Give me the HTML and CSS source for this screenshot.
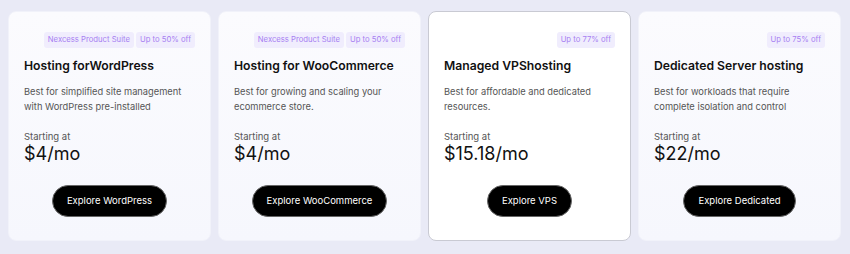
FILE: index.html
```html
<!DOCTYPE html>
<html lang="en">
<head>
  <meta charset="UTF-8" />
  <meta name="viewport" content="width=device-width, initial-scale=1" />
  <title>Hosting plans</title>
  <link rel="stylesheet" href="styles.css">
</head>
<body>
  <div class="plans">
    <div class="plan">
      <div class="tags"><span class="tag">Nexcess Product Suite</span><span class="tag">Up to 50% off</span></div>
      <h3>Hosting forWordPress</h3>
      <p class="desc">Best for simplified site management with WordPress pre-installed</p>
      <p class="from">Starting at</p>
      <p class="price">$4/mo</p>
      <div class="cta"><a class="btn" href="#">Explore WordPress</a></div>
    </div>
    <div class="plan">
      <div class="tags"><span class="tag">Nexcess Product Suite</span><span class="tag">Up to 50% off</span></div>
      <h3>Hosting for WooCommerce</h3>
      <p class="desc">Best for growing and scaling your ecommerce store.</p>
      <p class="from">Starting at</p>
      <p class="price">$4/mo</p>
      <div class="cta"><a class="btn" href="#">Explore WooCommerce</a></div>
    </div>
    <div class="plan active">
      <div class="tags"><span class="tag">Up to 77% off</span></div>
      <h3>Managed VPShosting</h3>
      <p class="desc">Best for affordable and dedicated resources.</p>
      <p class="from">Starting at</p>
      <p class="price">$15.18/mo</p>
      <div class="cta"><a class="btn" href="#">Explore VPS</a></div>
    </div>
    <div class="plan">
      <div class="tags"><span class="tag">Up to 75% off</span></div>
      <h3>Dedicated Server hosting</h3>
      <p class="desc">Best for workloads that require complete isolation and control</p>
      <p class="from">Starting at</p>
      <p class="price">$22/mo</p>
      <div class="cta"><a class="btn" href="#">Explore Dedicated</a></div>
    </div>
  </div>
</body>
</html>
```

FILE: styles.css
```css
body {
  margin: 0;
  background: #e9eaf6;
  font-family: Inter, "Liberation Sans", sans-serif;
  color: #111;
}
.plans {
  display: flex;
  gap: 7px;
  padding: 11px 9px 13px 8px;
}
.plan {
  flex: 1;
  height: 230px;
  box-sizing: border-box;
  padding: 20px 15px 0 15px;
  background: linear-gradient(#fbfbfe, #f6f7fd);
  border: 1px solid #f1f2fa;
  border-radius: 8px;
}
.plan.active {
  border-color: #c9cad3;
  background: #fff;
}
.tags {
  display: flex;
  justify-content: flex-end;
  gap: 2px;
  height: 16px;
}
.tag {
  background: #f0edfd;
  color: #a77ff2;
  font-size: 7.7px;
  line-height: 16px;
  padding: 0 4px;
  border-radius: 3px;
}
h3 {
  margin: 10px 0 0;
  font-size: 12.2px;
  font-weight: 600;
  line-height: 16px;
}
.desc {
  margin: 10px 0 0;
  font-size: 9.3px;
  line-height: 15px;
  color: #555;
  height: 30px;
}
.from {
  margin: 17px 0 0;
  font-size: 9.5px;
  line-height: 12px;
  color: #555;
}
.price {
  margin: 0;
  font-size: 18px;
  line-height: 22px;
}
.cta {
  display: flex;
  justify-content: center;
  margin-top: 20px;
}
.btn {
  display: inline-block;
  background: #000;
  color: #fff;
  text-decoration: none;
  font-size: 9.5px;
  line-height: 30px;
  padding: 0 14px;
  border-radius: 16px;
  border: 1px solid #666;
}
```
